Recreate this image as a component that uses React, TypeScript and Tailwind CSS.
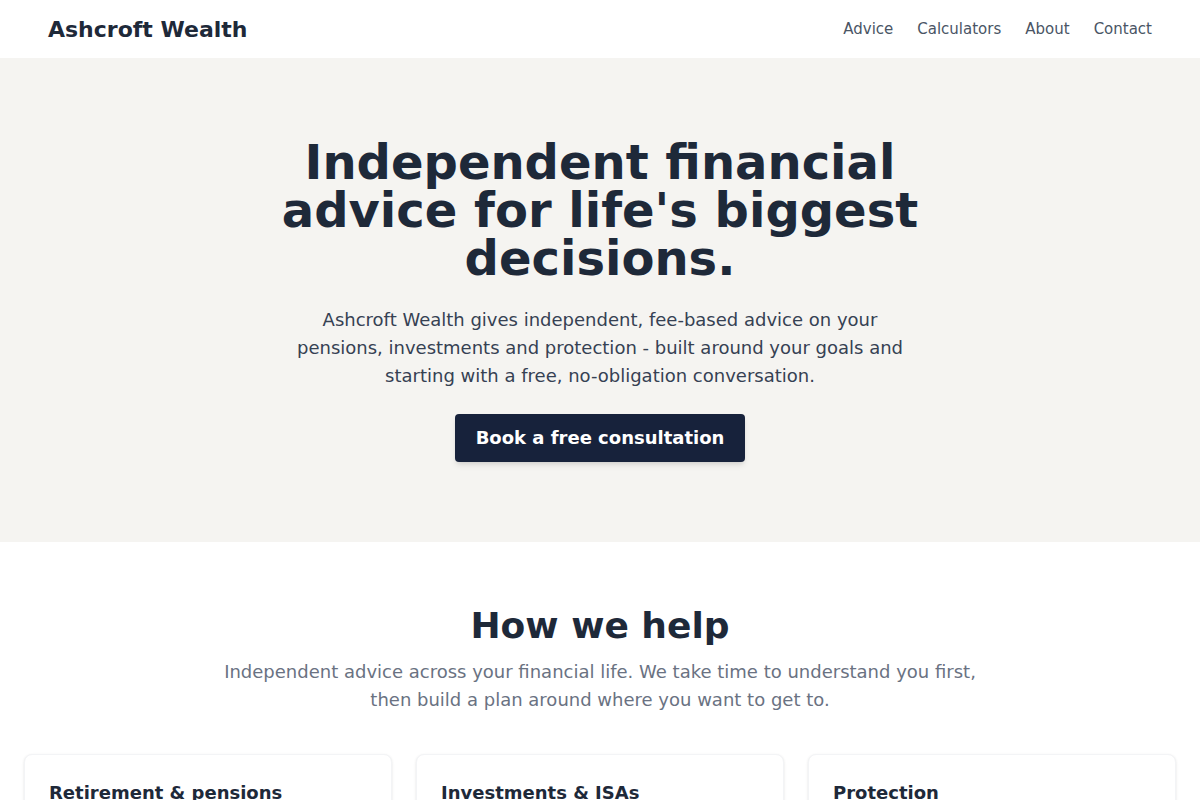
import React from "react";

const services = [
  {
    title: "Retirement & pensions",
    body: "Plan when and how you retire, consolidate old pensions and draw an income that lasts.",
  },
  {
    title: "Investments & ISAs",
    body: "Build a portfolio matched to your goals and attitude to risk, using your allowances well.",
  },
  {
    title: "Protection",
    body: "Life cover, income protection and critical illness cover to keep your family secure.",
  },
];

export default function App() {
  return (
    <div className="min-h-screen bg-white text-gray-800" style={{ fontFamily: '"DejaVu Sans", Verdana, sans-serif' }}>
      <header className="flex h-[58px] items-center justify-between bg-white px-12">
        <div className="text-[22px] font-bold text-gray-800">Ashcroft Wealth</div>
        <nav className="flex items-center gap-6 text-[15px] text-gray-600">
          <a href="#">Advice</a>
          <a href="#">Calculators</a>
          <a href="#">About</a>
          <a href="#">Contact</a>
        </nav>
      </header>

      <section className="flex flex-col items-center bg-[#f5f4f1] px-6 py-20 text-center">
        <h1 className="max-w-2xl text-5xl leading-none font-bold text-gray-800">
          Independent financial advice for life's biggest decisions.
        </h1>
        <p className="mt-6 max-w-[624px] text-lg text-gray-700">
          Ashcroft Wealth gives independent, fee-based advice on your pensions, investments and
          protection - built around your goals and starting with a free, no-obligation conversation.
        </p>
        <a
          href="#"
          className="mt-6 rounded bg-[#17223b] px-[21px] py-2.5 text-lg font-bold text-white shadow-md"
        >
          Book a free consultation
        </a>
      </section>

      <section className="px-6 py-16">
        <div className="flex flex-col items-center text-center">
          <h2 className="text-4xl font-bold text-gray-800">How we help</h2>
          <p className="mt-3 max-w-3xl text-lg text-gray-500">
            Independent advice across your financial life. We take time to understand you first,
            then build a plan around where you want to get to.
          </p>
        </div>
        <div className="mt-10 grid grid-cols-3 gap-6">
          {services.map((s) => (
            <div key={s.title} className="rounded-lg border border-gray-100 bg-white p-6 shadow-sm">
              <h3 className="text-lg font-bold text-gray-800">{s.title}</h3>
              <p className="mt-2 text-base text-gray-600">{s.body}</p>
            </div>
          ))}
        </div>
      </section>
    </div>
  );
}
